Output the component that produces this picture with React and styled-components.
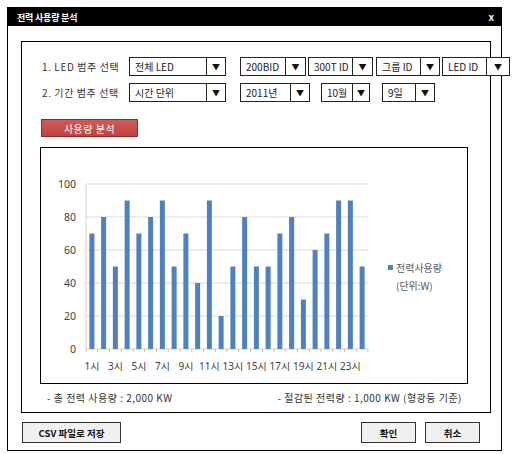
import styled, { createGlobalStyle } from 'styled-components';

const GlobalStyle = createGlobalStyle`
  body {
    margin: 0;
    background: #ffffff;
    font-family: 'Noto Sans CJK KR', 'Noto Sans', sans-serif;
  }
`;

const usage = [70, 80, 50, 90, 70, 80, 90, 50, 70, 40, 90, 20, 50, 80, 50, 50, 70, 80, 30, 60, 70, 90, 90, 50];

const row1 = [
  { text: '200BID', width: 66, arrow: 19, ml: 14 },
  { text: '300T ID', width: 65, arrow: 19, ml: 2 },
  { text: '그룹 ID', width: 64, arrow: 18, ml: 3 },
  { text: 'LED ID', width: 68, arrow: 22, ml: 2 },
];

const row2 = [
  { text: '2011년', width: 70, arrow: 18, ml: 14 },
  { text: '10월', width: 49, arrow: 16, ml: 11 },
  { text: '9일', width: 53, arrow: 18, ml: 12 },
];

const Chart = () => {
  const x0 = 45;
  const x1 = 327;
  const base = 201;
  const step = (x1 - x0) / usage.length;
  const yOf = (v) => base - v * 1.65;
  return (
    <svg width="426" height="235" viewBox="0 0 426 235">
      {[20, 40, 60, 80, 100].map((v) => (
        <line key={v} x1={x0} x2={x1} y1={yOf(v)} y2={yOf(v)} stroke="#d9d9d9" strokeWidth="1" />
      ))}
      <line x1={x0} x2={x0} y1={yOf(100)} y2={base} stroke="#e3d3b8" strokeWidth="1" />
      <line x1={x0} x2={x1} y1={base} y2={base} stroke="#e0cdb0" strokeWidth="1" />
      {usage.map((_, i) => (
        <line key={'t' + i} x1={x0 + step * i} x2={x0 + step * i} y1={base} y2={base + 3} stroke="#e3b9a0" strokeWidth="1" />
      ))}
      <line x1={x1} x2={x1} y1={base} y2={base + 3} stroke="#e3b9a0" strokeWidth="1" />
      {[0, 20, 40, 60, 80, 100].map((v) => (
        <text key={'y' + v} x="35" y={yOf(v) + 3.5} textAnchor="end" fontSize="10.5" fill="#404040" fontFamily="'Noto Sans', sans-serif">
          {v}
        </text>
      ))}
      {usage.map((v, i) => (
        <rect key={'b' + i} x={x0 + step * (i + 0.5) - 2.5} y={yOf(v)} width="5" height={v * 1.65} fill="#4f81bd" />
      ))}
      {usage.map((_, i) =>
        i % 2 === 0 ? (
          <text key={'x' + i} x={x0 + step * (i + 0.5)} y="222" textAnchor="middle" fontSize="10" fill="#404040" fontFamily="'Noto Sans', 'Noto Sans CJK KR', sans-serif">
            {i + 1}시
          </text>
        ) : null
      )}
      <rect x="347" y="117" width="5" height="5" fill="#4f81bd" />
      <text x="355" y="124" fontSize="10" fill="#595959" fontFamily="'Noto Sans CJK KR', sans-serif">전력사용량</text>
      <text x="355" y="142" fontSize="10" fill="#595959" fontFamily="'Noto Sans CJK KR', sans-serif">(단위:W)</text>
    </svg>
  );
};

const Select = ({ text, width, arrow, ml }) => (
  <SelectBox $width={width} $ml={ml}>
    <SelectText>{text}</SelectText>
    <SelectArrow $width={arrow}>▼</SelectArrow>
  </SelectBox>
);

const App = () => {
  return (
    <>
      <GlobalStyle />
      <Window>
        <TitleBar>
          <Title>전력 사용량 분석</Title>
          <Close>x</Close>
        </TitleBar>
        <Panel>
          <FilterRow>
            <Label>1. LED 범주 선택</Label>
            <Select text="전체 LED" width={97} arrow={18} ml={0} />
            {row1.map((s) => (
              <Select key={s.text} {...s} />
            ))}
          </FilterRow>
          <FilterRow>
            <Label>2. 기간 범주 선택</Label>
            <Select text="시간 단위" width={97} arrow={18} ml={0} />
            {row2.map((s) => (
              <Select key={s.text} {...s} />
            ))}
          </FilterRow>
          <AnalyzeButton>사용량 분석</AnalyzeButton>
          <ChartBox>
            <Chart />
          </ChartBox>
          <SummaryRow>
            <span>- 총 전력 사용량 : 2,000 KW</span>
            <span>- 절감된 전력량 : 1,000 KW (형광등 기준)</span>
          </SummaryRow>
        </Panel>
        <Footer>
          <FooterButton $width={99}>CSV 파일로 저장</FooterButton>
          <Spacer />
          <FooterButton $width={55}>확인</FooterButton>
          <FooterButton $width={55}>취소</FooterButton>
        </Footer>
      </Window>
    </>
  );
};

export default App;

const Window = styled.div`
  margin: 7px 0 0 7px;
  width: 495px;
  height: 444px;
  box-sizing: border-box;
  border: 1px solid #000;
  background: #fff;
  display: flex;
  flex-direction: column;
`;

const TitleBar = styled.div`
  height: 18px;
  background: #000;
  display: flex;
  align-items: center;
  justify-content: space-between;
  padding: 0 7px 0 9px;
`;

const Title = styled.div`
  color: #fff;
  font-size: 9px;
  font-weight: bold;
  letter-spacing: -0.2px;
`;

const Close = styled.div`
  color: #fff;
  font-family: 'Liberation Sans', sans-serif;
  font-size: 10px;
  font-weight: bold;
`;

const Panel = styled.div`
  margin: 15px 0 0 13px;
  width: 470px;
  height: 372px;
  box-sizing: border-box;
  border: 1px solid #000;
  padding: 15px 0 0 18px;
  display: flex;
  flex-direction: column;
`;

const FilterRow = styled.div`
  display: flex;
  align-items: center;
  padding-left: 2px;
  height: 19px;
  margin-bottom: 7px;
`;

const Label = styled.div`
  flex: none;
  width: 87px;
  font-size: 10px;
  letter-spacing: 0.6px;
  color: #333;
  white-space: nowrap;
`;

const SelectBox = styled.div`
  flex: none;
  width: ${(p) => p.$width}px;
  height: 19px;
  margin-left: ${(p) => p.$ml}px;
  box-sizing: border-box;
  border: 1px solid #222;
  background: #fff;
  display: flex;
`;

const SelectText = styled.div`
  flex: 1;
  padding-left: 5px;
  font-size: 10px;
  line-height: 17px;
  color: #222;
  white-space: nowrap;
  overflow: hidden;
`;

const SelectArrow = styled.div`
  width: ${(p) => p.$width}px;
  border-left: 1px solid #222;
  display: flex;
  align-items: center;
  justify-content: center;
  font-size: 8px;
  color: #111;
`;

const AnalyzeButton = styled.div`
  margin: 10px 0 0 1px;
  width: 97px;
  height: 18px;
  box-sizing: border-box;
  border: 1px solid #8e2f2d;
  background: linear-gradient(#d05a57, #bd4541);
  color: #fff;
  font-size: 10px;
  letter-spacing: 0.5px;
  display: flex;
  align-items: center;
  justify-content: center;
`;

const ChartBox = styled.div`
  margin-top: 10px;
  width: 428px;
  height: 237px;
  box-sizing: border-box;
  border: 1px solid #000;
  background: #fff;
  display: flex;
`;

const SummaryRow = styled.div`
  display: flex;
  justify-content: space-between;
  padding: 6px 6px 0 7px;
  width: 428px;
  box-sizing: border-box;
  font-size: 10px;
  letter-spacing: 0.5px;
  color: #333;
`;

const Footer = styled.div`
  display: flex;
  gap: 9px;
  margin-top: 9px;
  padding: 0 21px 0 14px;
`;

const Spacer = styled.div`
  flex: 1;
`;

const FooterButton = styled.div`
  width: ${(p) => p.$width}px;
  height: 21px;
  box-sizing: border-box;
  border: 1px solid #333;
  background: #f0f0f0;
  font-size: 9.5px;
  font-weight: bold;
  color: #111;
  display: flex;
  align-items: center;
  justify-content: center;
`;
